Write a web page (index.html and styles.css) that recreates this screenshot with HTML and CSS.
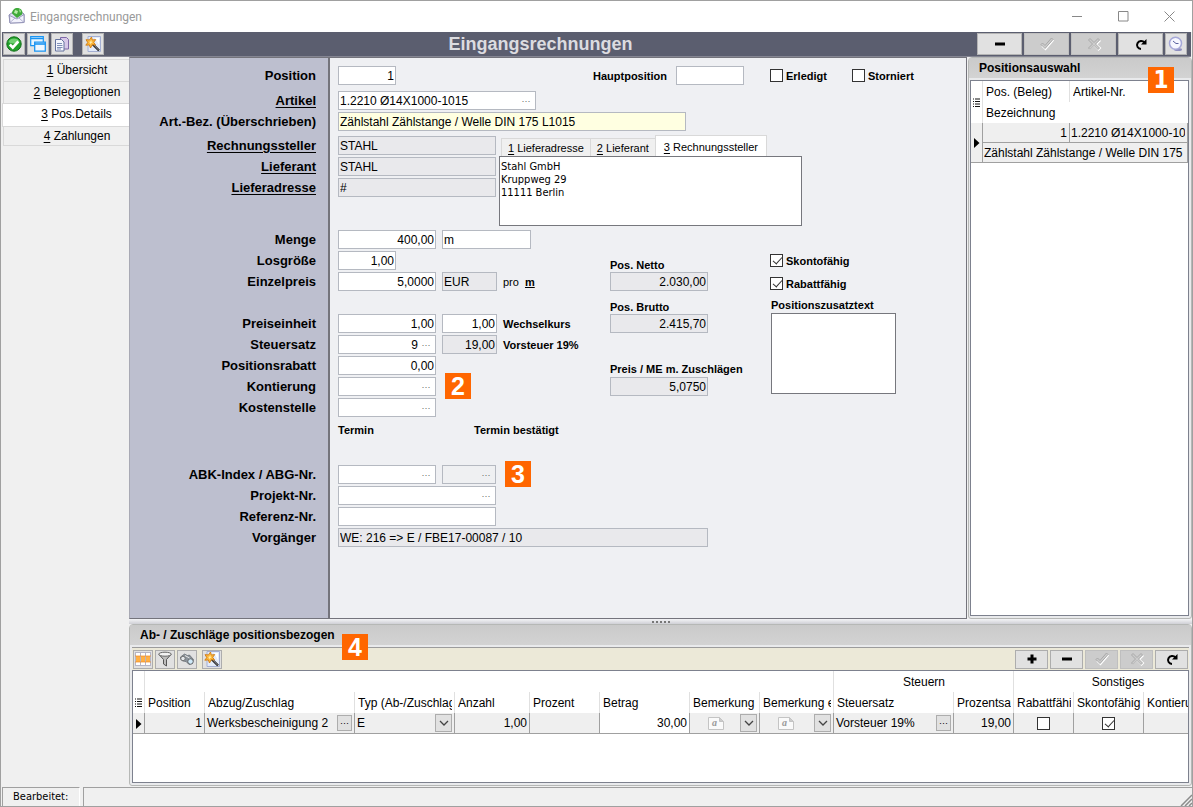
FILE: index.html
```html
<!DOCTYPE html>
<html lang="de">
<head>
<meta charset="utf-8">
<title>Eingangsrechnungen</title>
<link rel="stylesheet" href="styles.css">
</head>
<body>
<svg class="defs" aria-hidden="true">
  <symbol id="i-wand" viewBox="0 0 16 16">
    <path d="M3 .5h12.5v15H3z" fill="#e3ebfa" stroke="#a3aed2"/>
    <path d="M10 2h4v7z" fill="#fff"/>
    <path d="M7.500 8l6.500 6.500" stroke="#222" stroke-width="2.400"/>
    <path d="M8.500 8.500l5 5.500" stroke="#8a8a95" stroke-width="1"/>
    <path d="M6.500 1l.8 3 3.400-.4-2 2.700 1.800 2.700-3.200-.3L5.500 12l-1.200-3.100L.8 9.200l2-2.700L1 3.700l3.400.2z" fill="#fdb93e" stroke="#d07a10" stroke-width=".9"/>
    <path d="M6.200 4l.4 2 1.200.3-1.700.6-.9 1.400-.3-1.700L3.600 6l1.700-.3z" fill="#fff0b0"/>
  </symbol>
  <symbol id="i-minus" viewBox="0 0 16 16"><path d="M3 6.500h10v3H3z" fill="#000"/></symbol>
  <symbol id="i-plus" viewBox="0 0 16 16"><path d="M3.500 6.500h3v-3h3v3h3v3h-3v3h-3v-3h-3z" fill="#000"/></symbol>
  <symbol id="i-check" viewBox="0 0 16 16">
    <path d="M3 10l3.500 3.500L14.500 4" fill="none" stroke="#fff" stroke-width="1.500"/>
    <path d="M2 8.500l1.500-1.500 2.500 2.500L12.500 2l1.500 1.500L6 12.500z" fill="#ccc" stroke="#a4a4a4" stroke-width=".9"/>
  </symbol>
  <symbol id="i-cross" viewBox="0 0 16 16">
    <path d="M3.500 13.500l4.500-4 4.500 4.500 2-2-4-3.500 4-4" fill="none" stroke="#fff" stroke-width="1.300"/>
    <path d="M2.500 4L4 2.500l4 4 4-4L13.500 4l-4 4 4 4-1.500 1.500-4-4-4 4L2.500 12l4-4z" fill="#ccc" stroke="#a4a4a4" stroke-width=".9"/>
  </symbol>
  <symbol id="i-redo" viewBox="0 0 16 16">
    <path d="M11.500 6.500A4.200 4 0 1 0 8 13" fill="none" stroke="#000" stroke-width="2"/>
    <path d="M13.500 3v5.500H8z" fill="#000"/>
  </symbol>
  <symbol id="i-chev" viewBox="0 0 10 10"><path d="M1 3l4 4 4-4" fill="none" stroke="#444" stroke-width="1.300"/></symbol>
  <symbol id="i-rows" viewBox="0 0 8 10">
    <path d="M0 1h1m1 0h5M0 3.500h1m1 0h5M0 6h1m1 0h5M0 8.500h1m1 0h5" stroke="#111" fill="none"/>
  </symbol>
  <symbol id="i-current" viewBox="0 0 6 10"><path d="M0 0l5.500 5L0 10z" fill="#000"/></symbol>
</svg>

<div class="window">
  <header class="titlebar">
    <svg class="app-icon" viewBox="0 0 17 17" aria-hidden="true">
      <path d="M1 8l8-6 7 5v8.500L2 16z" fill="#dcdcf2" stroke="#8888ae"/>
      <path d="M4 6.500C4 2 8 .2 11 1.200c3 1 4 4 3 6.300L9 11z" fill="#3faa3a"/>
      <path d="M7 3l3 1-1 3-3-1zM11 2l2 2-1 2z" fill="#b9ecaa"/>
      <path d="M1.500 8.500L9 12l7-4.500v8L2 16z" fill="#f2f2fc" stroke="#8888ae" stroke-width=".8"/>
      <path d="M2 15.500l5-4.500m9 4.500L11 11" stroke="#a2a2c5" stroke-width=".8"/>
    </svg>
    <span class="window-title">Eingangsrechnungen</span>
    <button class="win-btn" aria-label="Minimieren"><svg viewBox="0 0 11 11"><path d="M0 5.500h10"/></svg></button>
    <button class="win-btn" aria-label="Maximieren"><svg viewBox="0 0 11 11"><path d="M.5.5h9.500v9.500H.5z"/></svg></button>
    <button class="win-btn" aria-label="Schließen"><svg viewBox="0 0 11 11"><path d="M.5.5l10 10m0-10l-10 10"/></svg></button>
  </header>

  <div class="toolbar">
    <button class="tool" aria-label="OK"><svg viewBox="0 0 16 16"><circle cx="8" cy="8" r="7.200" fill="#20a02a" stroke="#117018"/><path d="M2.500 6a5.800 5 0 0 1 11 0c-3 2-8 2-11 0z" fill="#6fd071"/><path d="M3.800 8.500l3 3 5.500-6" fill="none" stroke="#fff" stroke-width="2.600"/></svg></button>
    <button class="tool" aria-label="Fenster"><svg viewBox="0 0 16 16"><path d="M.7.7h12.600v9H.7z" fill="#e8f5ff" stroke="#1a94f2" stroke-width="1.200"/><path d="M.7 2.500h12.600" stroke="#1a94f2" stroke-width="1.500"/><path d="M4.700 6.200h10.600v9H4.700z" fill="#eef7ff" stroke="#1a94f2" stroke-width="1.300"/><path d="M4.700 8h10.600" stroke="#1a94f2" stroke-width="1.600"/></svg></button>
    <button class="tool" aria-label="Kopieren"><svg viewBox="0 0 16 16"><path d="M6.500 1.500h6l2 2V13h-8z" fill="#d7c8e8" stroke="#7f68a8"/><path d="M1.500 3.500h6l2.500 2.500v9H1.500z" fill="#f4f6fd" stroke="#65739e"/><path d="M3 7.500h5M3 9.500h5.500M3 11.500h5.500M3 13h4" stroke="#8090b8"/></svg></button>
    <button class="tool tool-apart" aria-label="Assistent"><svg><use href="#i-wand"/></svg></button>
    <h1>Eingangsrechnungen</h1>
    <button class="action" aria-label="Löschen"><svg><use href="#i-minus"/></svg></button>
    <button class="action" disabled aria-label="Speichern"><svg><use href="#i-check"/></svg></button>
    <button class="action" disabled aria-label="Abbrechen"><svg><use href="#i-cross"/></svg></button>
    <button class="action" aria-label="Aktualisieren"><svg><use href="#i-redo"/></svg></button>
    <button class="tool" aria-label="Termin"><svg viewBox="0 0 16 16"><ellipse cx="10" cy="13.500" rx="4" ry="1.500" fill="#8f8fc0"/><circle cx="7.500" cy="7.200" r="6" fill="#f6f7ff" stroke="#a6a8d8" stroke-width="1.500"/><path d="M5 5l3 2.500h2.500" fill="none" stroke="#5a62a0"/></svg></button>
  </div>

  <div class="workspace">
    <nav class="pages" aria-label="Seiten">
      <a href="#"><u>1</u> Übersicht</a>
      <a href="#"><u>2</u> Belegoptionen</a>
      <a href="#" class="active" aria-current="page"><u>3</u> Pos.Details</a>
      <a href="#"><u>4</u> Zahlungen</a>
    </nav>

    <main class="content">
      <div class="upper">
        <form class="details">
          <div class="row row-position">
            <label for="pos">Position</label>
            <div class="position-fields">
              <span><input id="pos" class="box num w-58" value="1"></span>
              <label class="small" for="hpos">Hauptposition</label>
              <span><input id="hpos" class="box w-68"></span>
              <label class="tick"><input type="checkbox">Erledigt</label>
              <label class="tick"><input type="checkbox">Storniert</label>
            </div>
          </div>
          <div class="row">
            <label for="art"><u>Artikel</u></label>
            <div class="combo w-198"><input id="art" value="1.2210 Ø14X1000-1015"><button type="button" aria-label="Artikel wählen">···</button></div>
          </div>
          <div class="row">
            <label for="bez">Art.-Bez. (Überschrieben)</label>
            <input id="bez" class="box marked w-348" value="Zählstahl Zählstange / Welle DIN 175 L1015">
          </div>

          <div class="address-block">
            <div class="rows">
              <div class="row"><label for="rs"><u>Rechnungssteller</u></label><input id="rs" class="box w-158" readonly value="STAHL"></div>
              <div class="row"><label for="lf"><u>Lieferant</u></label><input id="lf" class="box w-158" readonly value="STAHL"></div>
              <div class="row"><label for="la"><u>Lieferadresse</u></label><input id="la" class="box w-158" readonly value="#"></div>
            </div>
            <div class="address">
              <div class="tabs" role="tablist">
                <button type="button" role="tab"><u>1</u> Lieferadresse</button>
                <button type="button" role="tab"><u>2</u> Lieferant</button>
                <button type="button" role="tab" class="active" aria-selected="true"><u>3</u> Rechnungssteller</button>
              </div>
              <textarea aria-label="Adresse">Stahl GmbH
Kruppweg 29
11111 Berlin</textarea>
            </div>
          </div>

          <div class="price-block">
            <div class="rows">
              <div class="row"><label for="menge">Menge</label><div class="fields"><input id="menge" class="box num w-98" value="400,00"><input class="box w-89" aria-label="Mengeneinheit" value="m"></div></div>
              <div class="row"><label for="los">Losgröße</label><input id="los" class="box num w-58" value="1,00"></div>
              <div class="row"><label for="ep">Einzelpreis</label><div class="fields"><input id="ep" class="box num w-98" value="5,0000"><input class="box w-55" aria-label="Währung" readonly value="EUR"><span class="unit">pro <a href="#">m</a></span></div></div>
              <div class="row row-break"><label for="pe">Preiseinheit</label><div class="fields"><input id="pe" class="box num w-98" value="1,00"><input id="wk" class="box num w-55" value="1,00"><label class="small" for="wk">Wechselkurs</label></div></div>
              <div class="row"><label for="st">Steuersatz</label><div class="fields"><div class="combo num w-98"><input id="st" value="9"><button type="button" aria-label="Steuersatz wählen">···</button></div><input id="vs" class="box num w-55" readonly value="19,00"><label class="small" for="vs">Vorsteuer 19%</label></div></div>
              <div class="row"><label for="pr">Positionsrabatt</label><input id="pr" class="box num w-98" value="0,00"></div>
              <div class="row"><label for="kt">Kontierung</label><div class="fields"><div class="combo w-98"><input id="kt"><button type="button" aria-label="Konto wählen">···</button></div><span class="badge badge-account">2</span></div></div>
              <div class="row"><label for="ks">Kostenstelle</label><div class="combo w-98"><input id="ks"><button type="button" aria-label="Kostenstelle wählen">···</button></div></div>
            </div>
            <div class="totals">
              <label class="small" for="netto">Pos. Netto</label>
              <input id="netto" class="box num w-98" readonly value="2.030,00">
              <label class="small" for="brutto">Pos. Brutto</label>
              <input id="brutto" class="box num w-98" readonly value="2.415,70">
              <label class="small label-me" for="preisme">Preis / ME m. Zuschlägen</label>
              <input id="preisme" class="box num w-98" readonly value="5,0750">
            </div>
            <div class="extras">
              <label class="tick"><input type="checkbox" checked>Skontofähig</label>
              <label class="tick"><input type="checkbox" checked>Rabattfähig</label>
              <label class="small" for="zusatz">Positionszusatztext</label>
              <textarea id="zusatz"></textarea>
            </div>
          </div>

          <div class="row row-dates">
            <span></span>
            <div class="dates"><span class="small">Termin</span><span class="small">Termin bestätigt</span></div>
          </div>

          <div class="rows">
            <div class="row"><label for="abk">ABK-Index / ABG-Nr.</label><div class="fields"><div class="combo w-98"><input id="abk"><button type="button" aria-label="ABK wählen">···</button></div><div class="combo locked w-54"><input readonly aria-label="ABG-Nr."><button type="button" aria-label="ABG wählen">···</button></div><span class="badge badge-order">3</span></div></div>
            <div class="row"><label for="prj">Projekt-Nr.</label><div class="combo w-158"><input id="prj"><button type="button" aria-label="Projekt wählen">···</button></div></div>
            <div class="row"><label for="ref">Referenz-Nr.</label><input id="ref" class="box w-158"></div>
            <div class="row"><label for="vg">Vorgänger</label><input id="vg" class="box w-370" readonly value="WE: 216 =&gt; E / FBE17-00087 / 10"></div>
          </div>
        </form>

        <aside class="panel selection">
          <h2>Positionsauswahl</h2>
          <span class="badge badge-selection">1</span>
          <div class="grid-box">
            <table class="grid">
              <colgroup><col class="c-12"><col class="c-87"><col class="c-118"></colgroup>
              <thead>
                <tr><th rowspan="2" class="mark"><svg class="rows-icon"><use href="#i-rows"/></svg></th><th><span>Pos. (Beleg)</span></th><th class="plain"><span>Artikel-Nr.</span></th></tr>
                <tr><th colspan="2" class="plain"><span>Bezeichnung</span></th></tr>
              </thead>
              <tbody>
                <tr><td rowspan="2" class="mark"><svg class="current-icon"><use href="#i-current"/></svg></td><td class="num">1</td><td><span class="clip">1.2210 Ø14X1000-1015</span></td></tr>
                <tr><td colspan="2"><span class="clip">Zählstahl Zählstange / Welle DIN 175 L1015</span></td></tr>
              </tbody>
            </table>
          </div>
        </aside>
      </div>

      <div class="splitter"><i></i><i></i><i></i><i></i><i></i></div>

      <section class="panel surcharges">
        <h2>Ab- / Zuschläge positionsbezogen</h2>
        <span class="badge badge-surcharges">4</span>
        <div class="subbar">
          <button class="mini" aria-label="Ansicht"><svg viewBox="0 0 16 16"><path d="M0 1h16v14H0z" fill="#fff"/><path d="M0 5h16v6H0z" fill="#ffb045"/><path d="M0 1.500h16M0 14.500h16M.5 1v14M5.500 1v14M10.500 1v14M15.500 1v14" stroke="#b5b5c5"/><path d="M0 5h16M0 11h16" stroke="#ef8a20" stroke-width=".7"/></svg></button>
          <button class="mini" aria-label="Filter"><svg viewBox="0 0 16 16"><path d="M2 3.500l4.500 5V13l3 2V8.500l4.500-5z" fill="#bdbdbd" stroke="#555"/><ellipse cx="8" cy="3.200" rx="6.300" ry="2" fill="#f3f3f3" stroke="#666"/></svg></button>
          <button class="mini" aria-label="Suchen"><svg viewBox="0 0 16 16"><path d="M1.500 6l4-3 3 1.500 2-.5 4 4.500-1 4-3.500 1-3-3-3.500-.5-2-2z" fill="#8b939b" stroke="#555b62" stroke-width=".6"/><circle cx="4" cy="7.500" r="2.200" fill="#e4e7ea" stroke="#666" stroke-width=".8"/><circle cx="11.500" cy="10.500" r="2.700" fill="#cfe9f8" stroke="#555" stroke-width=".8"/><path d="M6 4.500l4.500 2.500" stroke="#e8e8e8"/></svg></button>
          <button class="mini mini-apart" aria-label="Assistent"><svg><use href="#i-wand"/></svg></button>
          <span class="fill"></span>
          <button class="mini-action" aria-label="Hinzufügen"><svg><use href="#i-plus"/></svg></button>
          <button class="mini-action" aria-label="Löschen"><svg><use href="#i-minus"/></svg></button>
          <button class="mini-action" disabled aria-label="Speichern"><svg><use href="#i-check"/></svg></button>
          <button class="mini-action" disabled aria-label="Abbrechen"><svg><use href="#i-cross"/></svg></button>
          <button class="mini-action" aria-label="Aktualisieren"><svg><use href="#i-redo"/></svg></button>
        </div>
        <div class="grid-box">
          <table class="grid grid-wide">
            <colgroup><col class="c-12"><col class="c-60"><col class="c-150"><col class="c-100"><col class="c-75"><col class="c-70"><col class="c-90"><col class="c-70"><col class="c-74"><col class="c-120"><col class="c-60"><col class="c-60"><col class="c-70"><col class="c-78"></colgroup>
            <thead>
              <tr><th></th><th colspan="8"></th><th colspan="2" class="group">Steuern</th><th colspan="3" class="group">Sonstiges</th></tr>
              <tr><th class="mark"><svg class="rows-icon"><use href="#i-rows"/></svg></th><th><span>Position</span></th><th><span>Abzug/Zuschlag</span></th><th><span>Typ (Ab-/Zuschlag)</span></th><th><span>Anzahl</span></th><th><span>Prozent</span></th><th><span>Betrag</span></th><th><span>Bemerkung</span></th><th><span>Bemerkung extern</span></th><th><span>Steuersatz</span></th><th><span>Prozentsatz</span></th><th><span>Rabattfähig</span></th><th><span>Skontofähig</span></th><th><span>Kontierung</span></th></tr>
            </thead>
            <tbody>
              <tr>
                <td class="mark"><svg class="current-icon"><use href="#i-current"/></svg></td>
                <td class="num">1</td>
                <td><div class="cell"><span>Werksbescheinigung 2</span><button class="dots" aria-label="Zuschlag wählen">···</button></div></td>
                <td><div class="cell"><select aria-label="Typ"><option>E</option></select><span class="drop"><svg><use href="#i-chev"/></svg></span></div></td>
                <td class="num">1,00</td><td></td><td class="num edit">30,00</td>
                <td><div class="cell"><span class="note"><svg viewBox="0 0 16 13"><path d="M.5.5h11l4 4v8H.5z"/><path d="M11.500.5v4h4z" class="fold"/></svg><em>a</em></span><button class="drop" aria-label="Bemerkung"><svg><use href="#i-chev"/></svg></button></div></td>
                <td><div class="cell"><span class="note"><svg viewBox="0 0 16 13"><path d="M.5.5h11l4 4v8H.5z"/><path d="M11.500.5v4h4z" class="fold"/></svg><em>a</em></span><button class="drop" aria-label="Bemerkung extern"><svg><use href="#i-chev"/></svg></button></div></td>
                <td><div class="cell"><span>Vorsteuer 19%</span><button class="dots" aria-label="Steuersatz wählen">···</button></div></td>
                <td class="num">19,00</td>
                <td class="mid"><input type="checkbox" aria-label="Rabattfähig"></td>
                <td class="mid"><input type="checkbox" checked aria-label="Skontofähig"></td>
                <td></td>
              </tr>
            </tbody>
          </table>
        </div>
      </section>
    </main>
  </div>

  <footer class="statusbar">
    <div class="status-label">Bearbeitet:</div>
    <div class="status-text"><svg viewBox="0 0 12 12" aria-hidden="true"><path d="M1 12L12 1M5 12l7-7M9 12l3-3" stroke="#8c8c8c" stroke-width="1.500"/></svg></div>
  </footer>
</div>
</body>
</html>
```

FILE: styles.css
```css
* { box-sizing: border-box; }

body {
  margin: 0;
  font: 12px/14px "Liberation Sans", Arial, sans-serif;
  color: #000;
}

button, input, textarea, select { font: inherit; color: inherit; margin: 0; }
button { padding: 0; display: flex; align-items: center; justify-content: center; }
u { text-underline-offset: 2px; }
.defs { display: none; }

.window {
  display: flex;
  flex-direction: column;
  min-height: 100vh;
  border: 1px solid #a0a0a0;
  background: #f0f0f0;
}

/* Title bar */
.titlebar {
  display: flex;
  align-items: center;
  height: 31px;
  padding-left: 7px;
  background: #fff;
}
.app-icon { width: 17px; height: 17px; margin: 0 5px 3px 0; }
.window-title {
  flex: 1;
  font: 12px/16px Roboto, "Open Sans", sans-serif;
  color: #999;
}
.win-btn { width: 46px; height: 29px; border: 0; background: none; }
.win-btn svg { width: 11px; height: 11px; fill: none; stroke: #888; }

/* Main toolbar */
.toolbar {
  display: flex;
  align-items: center;
  gap: 2px;
  height: 25px;
  margin: 0 1px;
  padding: 0 4px 0 1px;
  background: #5b5e6f;
  border-bottom: 1px solid #858693;
}
.toolbar h1 {
  flex: 1;
  margin: 0;
  text-align: center;
  font-size: 18px;
  line-height: 22px;
  color: #dcdce0;
}
.tool, .action {
  width: 22px;
  height: 22px;
  border: 1px solid #b4b4b4;
  background: #e1e1e1;
}
.tool svg, .action svg { width: 16px; height: 16px; }
.tool-apart { margin-left: 7px; }
.action { width: 45px; }
.action:disabled, .mini-action:disabled { background: #ccc; border-color: #bfbfbf; }

/* Page navigation */
.workspace { display: flex; flex: 1; }
.pages { width: 128px; padding: 2px 0 0 2px; }
.pages a {
  display: block;
  height: 22px;
  padding-left: 21px;
  border: 1px solid #d9d9d9;
  border-width: 1px 0 0 1px;
  text-align: center;
  line-height: 21px;
  color: #000;
  text-decoration: none;
}
.pages a:last-child { border-width: 0 0 1px 1px; height: 19px; line-height: 18px; }
.pages a.active { height: 24px; margin-left: -1px; background: #fff; border-bottom-width: 1px; }

.content { display: flex; flex-direction: column; flex: 1; min-width: 0; }
.upper { display: flex; flex: 1; }

/* Position form */
.details {
  flex: 1;
  min-width: 0;
  padding: 8px 0 0 1px;
  border: 1px solid #74747c;
  border-left-color: #a8a9b4;
  background: linear-gradient(to right, #bdbfcf 198px, #74747c 198px, #74747c 200px, #eff0f3 200px);
}
.rows { display: flex; flex-direction: column; gap: 2px; }
.row {
  display: grid;
  grid-template-columns: 185px 1fr;
  column-gap: 22px;
  align-items: center;
  min-height: 19px;
  margin-bottom: 2px;
}
.rows .row { margin-bottom: 0; }
.row > label { text-align: right; font-weight: bold; font-size: 13px; white-space: nowrap; }
.row-position { margin-bottom: 6px; }
.rows .row-break { margin-top: 21px; }
.position-fields {
  display: grid;
  grid-template-columns: 255px 83px 94px 82px auto;
  align-items: center;
}
.small { font-size: 11px; font-weight: bold; white-space: nowrap; }
.fields { display: flex; align-items: center; gap: 6px; position: relative; }
.unit { font-size: 11px; }
.unit a { margin-left: 3px; font-weight: bold; color: #000; }

.box, .combo {
  display: block;
  height: 19px;
  padding: 0 1px;
  border: 1px solid #b5b9c1;
  border-radius: 0;
  background: #fff;
}
.box[readonly] { background: #e9e9ec; }
.box.marked { background: #ffffe1; }
.num, .num input { text-align: right; }
.combo { display: flex; }
.combo input { flex: 1; min-width: 0; padding: 0; border: 0; background: none; }
.combo button { width: 16px; border: 0; background: none; color: #666; font-size: 9px; }
.combo.locked { background: #eff0f2; }
.w-54 { width: 54px; }
.w-55 { width: 55px; }
.w-58 { width: 58px; }
.w-68 { width: 68px; }
.w-89 { width: 89px; }
.w-98 { width: 98px; }
.w-158 { width: 158px; }
.w-198 { width: 198px; }
.w-348 { width: 348px; }
.w-370 { width: 370px; }

input[type="checkbox"] {
  appearance: none;
  position: relative;
  flex: none;
  width: 13px;
  height: 13px;
  border: 1px solid #333;
  background: #fff;
}
input[type="checkbox"]:checked::after {
  content: "";
  position: absolute;
  left: 4px;
  top: 0;
  width: 4px;
  height: 8px;
  border: solid #333;
  border-width: 0 1px 1px 0;
  transform: rotate(42deg);
}
.tick { display: flex; align-items: center; gap: 3px; height: 13px; font-size: 11px; font-weight: bold; }

textarea {
  display: block;
  padding: 3px 1px;
  border: 1px solid #76777d;
  border-radius: 0;
  background: #fff;
  resize: none;
}

.address-block { display: flex; align-items: flex-start; gap: 3px; margin-top: 5px; }
.address { width: 303px; }
.address textarea {
  width: 100%;
  height: 70px;
  font: 11px/13px "DejaVu Sans Condensed", "DejaVu Sans", sans-serif;
}
.tabs { display: flex; align-items: flex-end; height: 20px; padding-left: 2px; }
.tabs button {
  height: 18px;
  padding: 0 6px;
  border: 1px solid #d9d9d9;
  border-width: 1px 0 0 1px;
  background: #f0f0f0;
  font-size: 11px;
  white-space: pre;
}
.tabs .active { height: 21px; padding: 1px 8px 0; border-right-width: 1px; background: #fff; }

.price-block { display: flex; align-items: flex-start; margin-top: 4px; }
.price-block > .rows { width: 479px; }
.totals { display: flex; flex-direction: column; width: 160px; padding-top: 28px; }
.totals .box { margin-bottom: 9px; }
.totals .label-me { margin: 20px 0 1px; }
.extras { display: flex; flex-direction: column; padding-top: 24px; }
.extras .tick { margin-bottom: 10px; }
.extras .tick + .small { margin: -2px 0 1px 1px; }
.extras textarea { width: 125px; height: 81px; margin-left: 1px; }
.row-dates { height: 25px; margin-bottom: 23px; }
.dates { display: grid; grid-template-columns: 136px auto; }

/* Numbered markers */
.badge {
  position: absolute;
  width: 26px;
  height: 26px;
  background: #f60;
  color: #fff;
  text-align: center;
  font: bold 25px/27px "Liberation Sans", Arial, sans-serif;
}
.badge-account { left: 107px; top: -4px; }
.badge-order { left: 167px; top: -4px; }
.badge-selection {
  left: 179px;
  top: 9px;
  font: bold 24px/26px "DejaVu Sans Condensed", "DejaVu Sans", sans-serif;
}
.badge-surcharges { left: 212px; top: 9px; }

/* Panels and grids */
.panel {
  position: relative;
  display: flex;
  flex-direction: column;
  padding: 0 2px 2px 2px;
  border: 1px solid #b6b8b6;
  border-radius: 4px 4px 3px 3px;
  background: #e9eaec;
}
.panel h2 {
  margin: 0 -2px 2px;
  padding-left: 10px;
  font-size: 12px;
  line-height: 20px;
  background: linear-gradient(#cacaca, #d3d3d3);
}
.panel.selection { width: 224px; margin-left: 1px; padding-left: 1px; }
.selection h2 { margin-left: -1px; }
.selection .grid-box { flex: 1; }
.surcharges .grid-box { height: 113px; }
.grid-box { border: 1px solid #7d818e; background: #fff; overflow: hidden; }
.grid { table-layout: fixed; width: 100%; border-collapse: separate; border-spacing: 0; }
.grid-wide { width: 1089px; }
.grid th, .grid td {
  height: 21px;
  padding: 0 2px;
  text-align: left;
  font-weight: normal;
  white-space: nowrap;
  overflow: hidden;
}
.grid th { padding: 0 2px 0 3px; border-right: 1px solid #e0e0e0; }
.grid th span, .clip { display: block; overflow: hidden; }
.grid td { background: #efefef; border: solid #a0a0a0; border-width: 0 1px 1px 0; }
.selection td { height: 20px; }
.selection td:not(.mark) { padding-left: 1px; }
.grid th.plain { border-right: 0; }
.grid thead .group { text-align: center; }
.grid th.mark, .grid td.mark { padding: 0; text-align: center; }
.grid td.num { text-align: right; }
.grid td.edit { background: #fff; }
.grid td.mid { text-align: center; }
.mid input { vertical-align: middle; }
.rows-icon { width: 8px; height: 10px; vertical-align: middle; }
.current-icon { width: 6px; height: 10px; vertical-align: middle; }
.c-12 { width: 12px; }
.c-60 { width: 60px; }
.c-70 { width: 70px; }
.c-74 { width: 74px; }
.c-75 { width: 75px; }
.c-78 { width: 78px; }
.c-87 { width: 87px; }
.c-90 { width: 90px; }
.c-100 { width: 100px; }
.c-118 { width: 118px; }
.c-120 { width: 120px; }
.c-150 { width: 150px; }

.cell { display: flex; align-items: center; justify-content: space-between; height: 18px; }
.cell select { flex: 1; min-width: 0; padding: 0; border: 0; background: none; appearance: none; }
.dots, .drop { flex: none; width: 15px; height: 16px; border: 1px solid #adadad; background: #e1e1e1; font-size: 9px; }
.drop { display: flex; align-items: center; justify-content: center; width: 17px; height: 18px; }
.drop svg { width: 10px; height: 10px; }
.note { position: relative; width: 16px; height: 13px; margin-left: 16px; }
.note svg { display: block; width: 16px; height: 13px; fill: #fafafa; stroke: #c4c4c4; }
.note .fold { fill: #ccc; }
.note em { position: absolute; left: 4px; top: -1px; font: italic bold 10px/13px "Liberation Serif", serif; color: #999; }

.splitter {
  display: flex;
  justify-content: center;
  align-items: center;
  gap: 2px;
  height: 5px;
  background: linear-gradient(#f4f4f6, #cfd0d6);
}
.splitter i { width: 2px; height: 2px; background: #777; }

.subbar {
  display: flex;
  align-items: center;
  gap: 2px;
  height: 23px;
  padding: 0 1px;
  border-top: 1px solid #9c9c9c;
  background: #ece9d8;
}
.fill { flex: 1; }
.mini, .mini-action { width: 20px; height: 19px; border: 1px solid #adadad; background: #e1e1e1; }
.mini svg, .mini-action svg { width: 16px; height: 16px; }
.mini-action { width: 33px; }
.mini-apart { margin-left: 3px; }

/* Status bar */
.statusbar {
  display: flex;
  gap: 3px;
  height: 19px;
  margin-top: 1px;
  padding-left: 1px;
  font: 11px/18px "DejaVu Sans Condensed", "DejaVu Sans", sans-serif;
}
.status-label, .status-text { border: solid #a0a0a0; border-width: 1px 0 0 1px; }
.status-label { width: 78px; padding-left: 10px; border-right: 1px solid #fff; }
.status-text { display: flex; flex: 1; justify-content: flex-end; align-items: flex-end; }
.status-text svg { width: 12px; height: 12px; }
```
